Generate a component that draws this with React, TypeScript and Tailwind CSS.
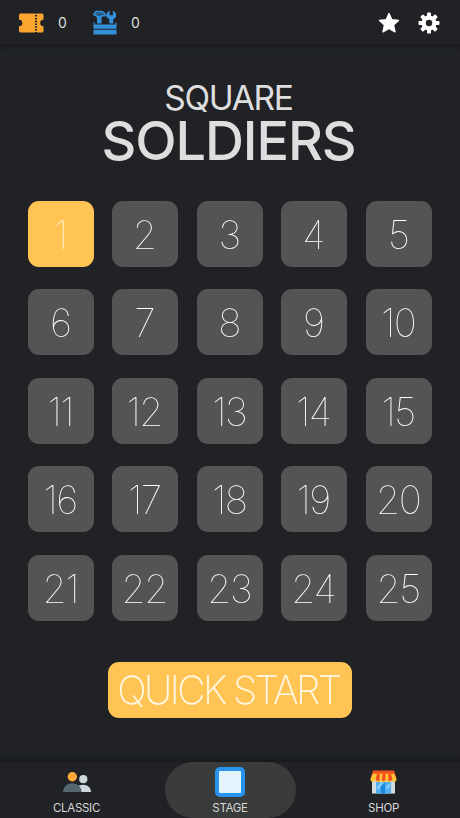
import type { ReactNode } from "react";

const stages = Array.from({ length: 25 }, (_, i) => i + 1);

function TicketIcon() {
  return (
    <svg width="26" height="20" viewBox="0 0 26 20" fill="#faa52d">
      <path d="M2.500 .5H17v19H2.500A1.500 1.500 0 0 1 1 18v-4.700A3.300 3.300 0 0 0 1 6.700V2A1.500 1.500 0 0 1 2.500 .5Z" />
      <path d="M19 .5h5A1.500 1.500 0 0 1 25.500 2v4.700a3.300 3.300 0 0 0 0 6.600V18a1.500 1.500 0 0 1-1.500 1.500h-5Z" />
      <path d="M18 .8v18.500" stroke="#faa52d" strokeWidth="2" strokeDasharray="1.300 1.500" />
    </svg>
  );
}

function ToolboxIcon() {
  return (
    <svg width="24" height="25" viewBox="0 0 24 25" fill="#3491d9">
      <path d="M4 6h4.600v7.500H4Z" />
      <path d="M.8 4.500 3 1.500h5c1.800 0 3.200 1 4 2.500v1.800H8.500l-1 1H4.200L3 5.500Z" fill="#245a83" stroke="#3491d9" strokeWidth="1.500" strokeLinejoin="round" />
      <path d="M16.600 .8v4.400h3.200V.8c2 .7 3.400 2.300 3.400 4.400 0 1.800-1.200 3.200-2.900 3.900v4.400h-4V9.100c-1.800-.7-3.100-2.100-3.100-3.900 0-2.100 1.400-3.700 3.400-4.400Z" />
      <path d="M.5 12.500h1.300v2h20.400v-2h1.300v6.200H.5ZM.5 19.800h23v4.700H.5Z" />
    </svg>
  );
}

function StarIcon() {
  return (
    <svg width="22" height="22" viewBox="0 0 22 22" fill="#fff" stroke="#fff" strokeWidth="1.400" strokeLinejoin="round">
      <path d="m11 1.600 2.800 6.200 6.700.7-5 4.500 1.500 6.800-6-3.500-6 3.500L6.500 13l-5-4.500 6.700-.7Z" />
    </svg>
  );
}

function GearIcon() {
  return (
    <svg width="22" height="22" viewBox="0 0 22 22">
      <g fill="#fff">
        {[0, 45, 90, 135].map((angle) => (
          <rect key={angle} x="9" y=".5" width="4" height="21" rx=".9" transform={`rotate(${angle} 11 11)`} />
        ))}
        <circle cx="11" cy="11" r="7.600" />
      </g>
      <circle cx="11" cy="11" r="3.200" fill="#202226" />
    </svg>
  );
}

function PeopleIcon() {
  return (
    <svg width="28" height="20" viewBox="0 0 28 20">
      <circle cx="20.300" cy="7.200" r="4.100" fill="#cfd8dc" />
      <path d="M12 20c0-4.500 3.700-7.300 8-7.300s8 2.800 8 7.300Z" fill="#cfd8dc" />
      <circle cx="9.300" cy="4.800" r="4.700" fill="#ffa93a" />
      <path d="M0 20c0-5.300 4-8.800 9.300-8.800s9.300 3.500 9.300 8.800Z" fill="#546670" />
    </svg>
  );
}

function ShopIcon() {
  return (
    <svg width="27" height="24" viewBox="0 0 28 25">
      <path d="M2 9h24v15.500H2Z" fill="#d5dce0" />
      <path d="M6.200 12.500h15.700v12H6.200Z" fill="#4fb0f4" />
      <path d="M11.300 13.500h4.200v11h-4.200Z" fill="#1e88d8" />
      <path d="m7 18 4-5h4l-8 8Zm10-.5 4-4v3.500l-4 4Z" fill="#8bd1fb" />
      <path d="M3 .5h22l2.500 8H.5Z" fill="#f4511e" />
      <path d="M3 4h22l2.500 5a2.700 2.700 0 0 1-5.400 1 2.700 2.700 0 0 1-5.400 0 2.700 2.700 0 0 1-5.400 0 2.700 2.700 0 0 1-5.400 0A2.700 2.700 0 0 1 .5 9Z" fill="#ffc534" />
      <path d="M7.300 4h2.800l-.3 7.500c-2.200.5-3.900-.5-3.900-2.500ZM13 4h3v6c0 2.200-3.600 2.200-3.600 0ZM19 4h2.800l1.300 5c0 2-2 3-4 2.200Z" fill="#f4511e" />
    </svg>
  );
}

function Header() {
  return (
    <header className="flex h-[44px] shrink-0 items-center justify-between bg-[#202226] pt-px pr-[20px] pl-[18px] shadow-[0_0_5px_2px_#17181a]">
      <div className="flex items-center">
        <TicketIcon />
        <span className="ml-[14px] w-[9px] text-[14px] text-[#dedede]">0</span>
        <div className="ml-[26px] -mt-px">
          <ToolboxIcon />
        </div>
        <span className="ml-[14px] text-[14px] text-[#dedede]">0</span>
      </div>
      <div className="flex items-center gap-[18px]">
        <StarIcon />
        <GearIcon />
      </div>
    </header>
  );
}

function StageButton({ stage }: { stage: number }) {
  return (
    <button
      className={`flex h-[66.400px] items-center justify-center rounded-[11px] pr-[2px] text-[39px] leading-none font-thin tracking-[-1.500px] will-change-transform ${
        stage === 1 ? "bg-[#ffc454] text-[#fff3d0]" : "bg-[#545454] text-white"
      }`}
    >
      {stage}
    </button>
  );
}

function NavItem({ label, active, children }: { label: string; active?: boolean; children: ReactNode }) {
  return (
    <button
      className={`flex h-[56px] w-[131px] flex-col items-center rounded-[28px] ${active ? "bg-[#3a3b3b]" : ""}`}
    >
      <span className="flex h-[39px] items-center">{children}</span>
      <span className="text-[11.500px] leading-[14px] tracking-[-0.300px] text-[#d8d8d8]">{label}</span>
    </button>
  );
}

export default function App() {
  return (
    <div className="flex h-[818px] w-[460px] flex-col overflow-hidden bg-[#202226] font-['Inter',sans-serif]">
      <Header />

      <main className="flex flex-1 flex-col items-center">
        <h1 className="flex flex-col items-center pt-[38px] pr-[3px] text-[#dedede]">
          <span className="text-[33.500px] leading-[32px] font-normal tracking-[-1.300px]">SQUARE</span>
          <span className="text-[54px] leading-[53px] font-medium tracking-[-1.100px]">SOLDIERS</span>
        </h1>

        <div className="mt-[34px] grid w-[404px] grid-cols-5 gap-x-[18px] gap-y-[22px]">
          {stages.map((stage) => (
            <StageButton key={stage} stage={stage} />
          ))}
        </div>

        <button className="mt-[41px] flex h-[56px] w-[244px] items-center justify-center rounded-[11px] bg-[#ffc454] pr-[3px] pb-px text-[39px] leading-none font-extralight tracking-[-2.600px] whitespace-nowrap text-[#fff8e6] will-change-transform">
          QUICK START
        </button>
      </main>

      <nav className="flex h-[56px] shrink-0 justify-between bg-[#202226] px-[11px] shadow-[0_0_5px_2px_#17181a]">
        <NavItem label="CLASSIC">
          <PeopleIcon />
        </NavItem>
        <NavItem label="STAGE" active>
          <span className="size-[30px] rounded-[5px] border-4 border-[#2994ee] bg-[#e2f4ff]" />
        </NavItem>
        <NavItem label="SHOP">
          <ShopIcon />
        </NavItem>
      </nav>
    </div>
  );
}
